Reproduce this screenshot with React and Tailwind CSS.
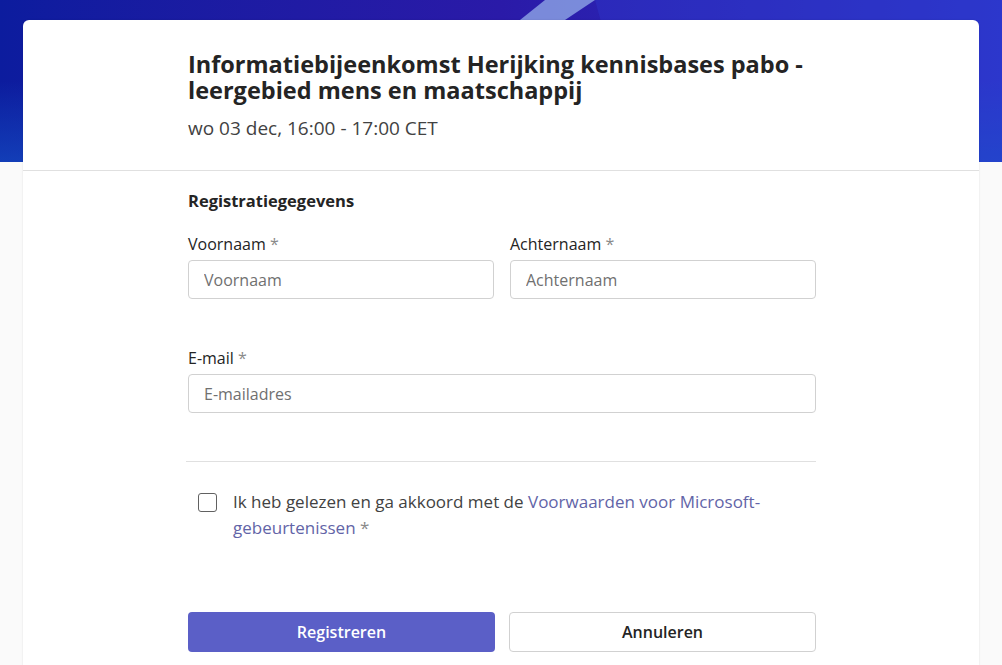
import React from 'react'

const font = { fontFamily: '"Open Sans", "Noto Sans", sans-serif' }

const Field = ({ label, placeholder }) => (
  <div className="flex flex-col">
    <label className="text-[16px] leading-[20px] text-[#242424]">
      {label} <span className="text-[#8a8a8a]">*</span>
    </label>
    <input
      placeholder={placeholder}
      className="mt-[6px] h-[39px] w-full rounded-[4px] border border-[#d1d1d1] bg-white px-[15px] text-[16px] text-[#242424] placeholder:text-[#707070] outline-none"
    />
  </div>
)

const Banner = () => (
  <div className="relative h-[162px] w-full overflow-hidden bg-gradient-to-r from-[#0c1c9e] via-[#2a1aa8] to-[#2b35c9]">
    <div className="absolute inset-0 bg-gradient-to-b from-transparent via-transparent to-[#1654c8]/60" />
    <svg className="absolute inset-0 h-full w-full" viewBox="0 0 1002 162" preserveAspectRatio="none">
      <polygon points="545,0 595,0 565,20 520,20" fill="#8fa6e6" opacity="0.8" />
      <polygon points="595,0 1002,0 1002,162 640,162" fill="#2f3bd0" opacity="0.35" />
    </svg>
  </div>
)

export default function App() {
  return (
    <div className="min-h-[665px] w-full bg-[#fafafa]" style={font}>
      <Banner />
      <div className="mx-[23px] -mt-[142px] relative rounded-t-[6px] bg-white shadow-[0_0_2px_rgba(0,0,0,0.12)]">
        <div className="pl-[165px] pr-[150px] pt-[31px] pb-[30px]">
          <h1 className="text-[23.5px] font-bold leading-[26px] text-[#242424]">
            Informatiebijeenkomst Herijking kennisbases pabo -<br />leergebied mens en maatschappij
          </h1>
          <p className="mt-[13px] text-[19px] leading-[24px] text-[#424242]">wo 03 dec, 16:00 - 17:00 CET</p>
        </div>
        <div className="border-t border-[#e0e0e0]" />
        <div className="pl-[165px] pr-[163px] pt-[20px] pb-[14px]">
          <h2 className="text-[16.5px] font-bold leading-[20px] text-[#242424]">Registratiegegevens</h2>
          <div className="mt-[23px] grid grid-cols-2 gap-x-[16px]">
            <Field label="Voornaam" placeholder="Voornaam" />
            <Field label="Achternaam" placeholder="Achternaam" />
          </div>
          <div className="mt-[49px]">
            <Field label="E-mail" placeholder="E-mailadres" />
          </div>
          <div className="mt-[48px] -ml-[2px] border-t border-[#e0e0e0]" />
          <div className="mt-[30px] flex items-start pl-[10px]">
            <span className="mt-[1px] h-[19px] w-[19px] shrink-0 rounded-[3px] border border-[#616161] bg-white" />
            <p className="ml-[16px] -mt-[3px] text-[17px] leading-[26px] text-[#424242]">
              Ik heb gelezen en ga akkoord met de{' '}
              <span className="text-[#6264a7]">Voorwaarden voor Microsoft-gebeurtenissen</span>{' '}
              <span className="text-[#8a8a8a]">*</span>
            </p>
          </div>
          <div className="mt-[71px] grid grid-cols-2 gap-x-[14px]">
            <button className="h-[40px] rounded-[4px] bg-[#5b5fc7] text-[16px] font-semibold text-white">Registreren</button>
            <button className="h-[40px] rounded-[4px] border border-[#d1d1d1] bg-white text-[16px] font-semibold text-[#242424]">Annuleren</button>
          </div>
        </div>
      </div>
    </div>
  )
}
